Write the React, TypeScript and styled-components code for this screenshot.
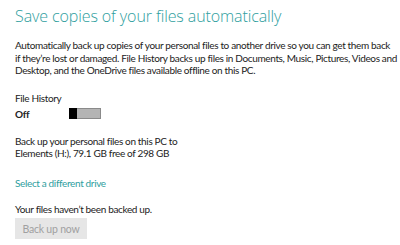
import React from "react";
import styled, { createGlobalStyle } from "styled-components";

const GlobalStyle = createGlobalStyle`
  html, body {
    margin: 0;
    padding: 0;
    background: #ffffff;
  }
  body {
    font-family: Lato, "Open Sans", sans-serif;
    color: #222222;
    letter-spacing: -0.35px;
  }
`;

const Page = styled.div`
  width: 400px;
  height: 245px;
  box-sizing: border-box;
  padding: 5px 0 0 15px;
  overflow: hidden;
`;

const Title = styled.h1`
  margin: 0;
  font-family: "Open Sans", sans-serif;
  font-size: 16px;
  font-weight: 300;
  line-height: 22px;
  letter-spacing: -0.1px;
  color: #2e9e9e;
`;

const Paragraph = styled.p<{ $top?: number }>`
  margin: ${(p) => p.$top ?? 0}px 0 0 0;
  font-size: 10px;
  line-height: 12.5px;
  white-space: nowrap;
  color: #222222;
`;

const Label = styled.div`
  margin-top: 15px;
  font-size: 10px;
  line-height: 13px;
`;

const ToggleRow = styled.div`
  display: flex;
  align-items: center;
  height: 14px;
  margin-top: 2px;
`;

const State = styled.span`
  width: 54px;
  font-size: 10px;
  font-weight: 700;
`;

const Toggle = styled.div`
  display: flex;
  width: 32px;
  height: 11px;
  box-sizing: border-box;
  border: 1px solid #8a8a8a;
  border-left: none;
  background: #b4b4b4;
`;

const Thumb = styled.div`
  width: 8px;
  height: 11px;
  margin-top: -1px;
  background: #000000;
`;

const Link = styled.a`
  display: block;
  margin-top: 17px;
  font-size: 10px;
  line-height: 13px;
  color: #2e9e9e;
  cursor: pointer;
`;

const Button = styled.button`
  display: block;
  margin-top: 3px;
  width: 72px;
  height: 21px;
  padding: 0;
  border: none;
  background: #e6e6e6;
  color: #a0a0a0;
  font-family: inherit;
  font-size: 10.5px;
  letter-spacing: -0.2px;
`;

export default function App() {
  return (
    <>
      <GlobalStyle />
      <Page>
        <Title>Save copies of your files automatically</Title>
        <Paragraph $top={12}>
          Automatically back up copies of your personal files to another drive so you can get them back
          <br />
          if they’re lost or damaged. File History backs up files in Documents, Music, Pictures, Videos and
          <br />
          Desktop, and the OneDrive files available offline on this PC.
        </Paragraph>
        <Label>File History</Label>
        <ToggleRow>
          <State>Off</State>
          <Toggle>
            <Thumb />
          </Toggle>
        </ToggleRow>
        <Paragraph $top={14}>
          Back up your personal files on this PC to
          <br />
          Elements (H:), 79.1 GB free of 298 GB
        </Paragraph>
        <Link>Select a different drive</Link>
        <Paragraph $top={13}>Your files haven’t been backed up.</Paragraph>
        <Button>Back up now</Button>
      </Page>
    </>
  );
}
